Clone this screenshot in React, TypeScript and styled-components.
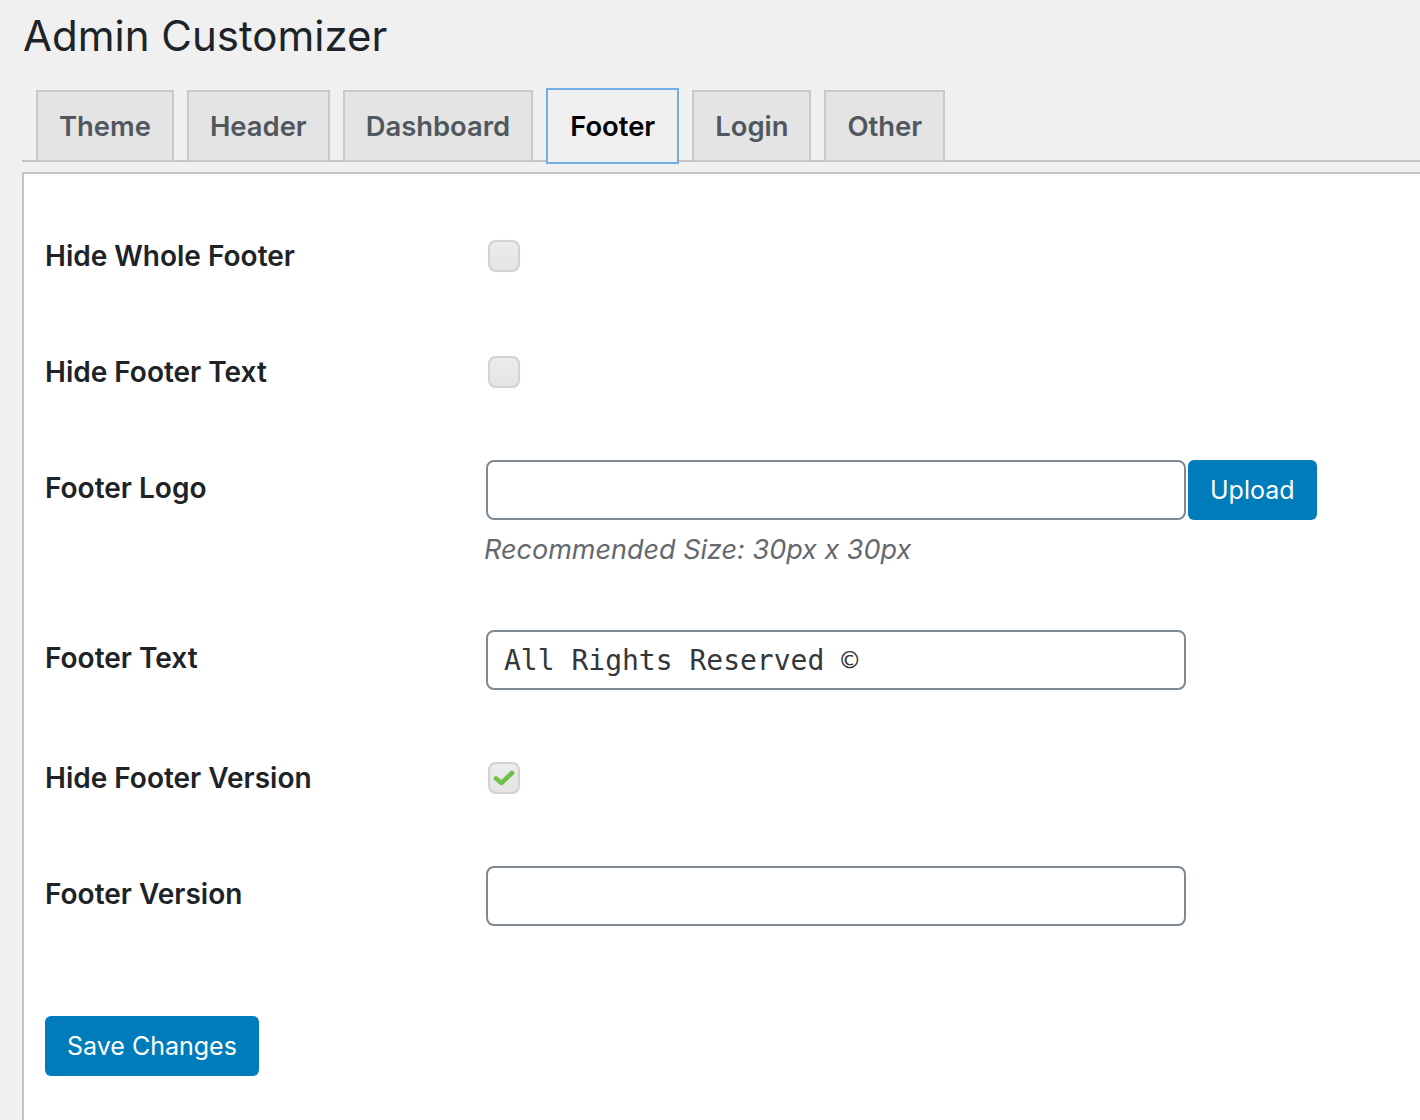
import React from 'react';
import styled, { createGlobalStyle } from 'styled-components';

const GlobalStyle = createGlobalStyle`
  html, body {
    margin: 0;
    padding: 0;
    background: #f0f0f1;
    overflow: hidden;
  }
  body {
    font-family: Inter, "Noto Sans", "Liberation Sans", sans-serif;
    color: #1d2327;
  }
`;

const Wrap = styled.div`
  padding-left: 22px;
  height: 1120px;
  display: flex;
  flex-direction: column;
`;

const Title = styled.h1`
  margin: 0;
  padding: 8px 0 0 1px;
  font-size: 42px;
  font-weight: 400;
  line-height: 56px;
  color: #1d2327;
`;

const TabBar = styled.nav`
  display: flex;
  align-items: flex-end;
  margin-top: 24px;
  border-bottom: 2px solid #c3c4c7;
  height: 72px;
`;

const Tab = styled.a<{ $active?: boolean }>`
  display: block;
  box-sizing: border-box;
  height: ${(p) => (p.$active ? '76px' : '72px')};
  margin-left: 14px;
  margin-bottom: ${(p) => (p.$active ? '-4px' : '-2px')};
  padding: 0 ${(p) => (p.$active ? '22px' : '21px')};
  border: 2px solid ${(p) => (p.$active ? '#72aee6' : '#c9c9c9')};
  background: ${(p) => (p.$active ? '#f0f0f1' : '#e4e4e4')};
  color: ${(p) => (p.$active ? '#000' : '#50575e')};
  font-size: 27.4px;
  font-weight: 600;
  line-height: ${(p) => (p.$active ? '72px' : '68px')};
  text-decoration: none;
  white-space: nowrap;
  & + & {
    margin-left: ${(p) => (p.$active ? '13px' : '15px')};
  }
`;

const Panel = styled.form`
  flex: 1;
  margin-top: 10px;
  background: #fff;
  border-left: 2px solid #c3c4c7;
  border-top: 2px solid #c3c4c7;
  padding: 24px 0 0 21px;
`;

const Row = styled.div`
  display: grid;
  grid-template-columns: 441px 1fr;
`;

const Label = styled.label`
  padding: 40px 0;
  font-size: 28px;
  font-weight: 600;
  line-height: 36px;
  color: #1d2327;
`;

const Field = styled.div`
  padding: 30px 0;
  display: flex;
  flex-direction: column;
  align-items: flex-start;
`;

const Inline = styled.div`
  display: flex;
  gap: 2px;
`;

const Check = styled.span<{ $checked?: boolean }>`
  display: flex;
  align-items: center;
  justify-content: center;
  box-sizing: border-box;
  width: 32px;
  height: 32px;
  margin: 12px 0 0 2px;
  border: 2px solid #d2d2d2;
  border-radius: 8px;
  background: linear-gradient(#ececec, #e4e4e4);
  box-shadow: 0 0 1px rgba(0, 0, 0, 0.15);
`;

const TextInput = styled.input<{ $mono?: boolean }>`
  box-sizing: border-box;
  width: 700px;
  height: 60px;
  margin: 0;
  padding: 0 16px;
  border: 2px solid #7e8993;
  border-radius: 8px;
  background: #fff;
  color: #32373c;
  font-family: ${(p) =>
    p.$mono ? '"DejaVu Sans Mono", "Liberation Mono", monospace' : 'inherit'};
  font-size: 28px;
  outline: none;
`;

const Button = styled.button`
  box-sizing: border-box;
  height: 60px;
  padding: 0 22px;
  border: 0;
  border-radius: 6px;
  background: #007cba;
  color: #fff;
  font-family: inherit;
  font-size: 25px;
  font-weight: 400;
  cursor: pointer;
`;

const Hint = styled.p`
  margin: 10px 0 0 -2px;
  font-size: 27px;
  line-height: 40px;
  font-style: italic;
  color: #646970;
`;

const Submit = styled.div`
  padding-top: 60px;
`;

const tabs = ['Theme', 'Header', 'Dashboard', 'Footer', 'Login', 'Other'];

const Tick = () => (
  <svg width="22" height="18" viewBox="0 0 22 18">
    <path
      d="M3 9.5 L8.5 14 L19 4"
      fill="none"
      stroke="#6fbf4a"
      strokeWidth="4.5"
      strokeLinecap="round"
      strokeLinejoin="round"
    />
  </svg>
);

const CheckRow = ({ label, checked }: { label: string; checked?: boolean }) => (
  <Row>
    <Label>{label}</Label>
    <Field>
      <Check $checked={checked}>{checked && <Tick />}</Check>
    </Field>
  </Row>
);

export default function App() {
  return (
    <>
      <GlobalStyle />
      <Wrap>
        <Title>Admin Customizer</Title>
        <TabBar>
          {tabs.map((t) => (
            <Tab key={t} href="#" $active={t === 'Footer'}>
              {t}
            </Tab>
          ))}
        </TabBar>
        <Panel onSubmit={(e) => e.preventDefault()}>
          <CheckRow label="Hide Whole Footer" />
          <CheckRow label="Hide Footer Text" />
          <Row>
            <Label>Footer Logo</Label>
            <Field>
              <Inline>
                <TextInput type="text" defaultValue="" />
                <Button type="button">Upload</Button>
              </Inline>
              <Hint>Recommended Size: 30px x 30px</Hint>
            </Field>
          </Row>
          <Row>
            <Label>Footer Text</Label>
            <Field>
              <TextInput type="text" $mono defaultValue="All Rights Reserved ©" />
            </Field>
          </Row>
          <CheckRow label="Hide Footer Version" checked />
          <Row>
            <Label>Footer Version</Label>
            <Field>
              <TextInput type="text" defaultValue="" />
            </Field>
          </Row>
          <Submit>
            <Button type="submit">Save Changes</Button>
          </Submit>
        </Panel>
      </Wrap>
    </>
  );
}
